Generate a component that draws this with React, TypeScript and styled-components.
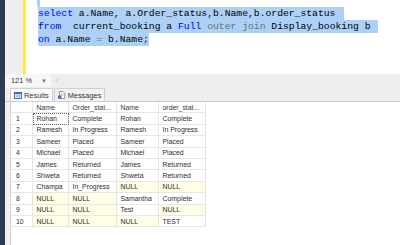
import { Fragment } from 'react';
import styled, { createGlobalStyle } from 'styled-components';

const GlobalStyle = createGlobalStyle`
    html, body {
        margin: 0;
        padding: 0;
        background: #ffffff;
    }
    body {
        width: 400px;
        height: 245px;
        overflow: hidden;
    }
`;

const Frame = styled.div`
    display: flex;
    width: 400px;
    height: 245px;
    font-family: "Liberation Sans", Arial, sans-serif;
`;

const SideStrip = styled.div`
    width: 5px;
    flex: none;
    background: #2c3a54;
`;

const Main = styled.div`
    flex: 1;
    min-width: 0;
    display: flex;
    flex-direction: column;
`;

const Editor = styled.div`
    height: 74px;
    flex: none;
    display: flex;
    overflow: hidden;
    background: #ffffff;
`;

const Gutter = styled.div`
    width: 18px;
    background: #efefef;
`;

const ChangeBar = styled.div`
    width: 3px;
    background: #fde84a;
`;

const Code = styled.div`
    flex: 1;
    padding-left: 12px;
    margin-top: -6px;
    font-family: "Liberation Mono", "DejaVu Sans Mono", monospace;
    font-size: 9.73px;
    color: #000000;
`;

const Line = styled.div`
    height: 13px;
    line-height: 13px;
    white-space: pre;
`;

const Sel = styled.span<{ $tail?: number; $caret?: boolean }>`
    display: inline-block;
    height: 13px;
    vertical-align: top;
    background: #add1f6;
    padding-right: ${(p) => p.$tail ?? 0}px;
    ${(p) => p.$caret && 'width: 3px; margin-left: -1px;'}
`;

const Kw = styled.span`
    color: #0000ff;
`;

const Op = styled.span`
    color: #6f6f6f;
`;

const ZoomBar = styled.div`
    height: 13px;
    flex: none;
    display: flex;
    font-size: 7.4px;
    color: #333333;
`;

const ZoomBox = styled.div`
    width: 46px;
    display: flex;
    align-items: center;
    justify-content: space-between;
    padding: 0 4px 0 6px;
    box-sizing: border-box;
    background: #f7f7f7;
`;

const Caret = styled.span`
    font-size: 6px;
    color: #777777;
`;

const ScrollTrack = styled.div`
    flex: 1;
    display: flex;
    align-items: center;
    padding-left: 4px;
    background: #eeeeee;
    color: #c4c4c4;
    font-size: 7px;
`;

const TabStrip = styled.div`
    height: 14px;
    flex: none;
    display: flex;
    align-items: flex-end;
    padding-left: 5px;
    background: #eeeeee;
    border-bottom: 1px solid #cdcdcd;
`;

const Tab = styled.div<{ $active?: boolean }>`
    height: 12px;
    display: flex;
    align-items: center;
    gap: 2px;
    padding: 0 3px;
    border: 1px solid #cfcfcf;
    border-bottom: none;
    margin-right: 1px;
    background: ${(p) => (p.$active ? '#fbfbfb' : '#f1f1f1')};
    font-size: 7.4px;
    color: #333333;
`;

const ResultsArea = styled.div`
    flex: 1;
    display: flex;
    min-height: 0;
`;

const ResultsGap = styled.div`
    width: 5px;
    background: #f0f0f0;
`;

const GridPane = styled.div`
    flex: 1;
    background: #ffffff;
    border-left: 1px solid #d4d4d4;
`;

const Grid = styled.div`
    display: grid;
    grid-template-columns: 22px 36px 48px 42px 47px;
    grid-auto-rows: 11.4px;
    font-size: 6.9px;
    color: #2e2e2e;
`;

const Cell = styled.div<{ $null?: boolean; $focus?: boolean; $num?: boolean }>`
    display: flex;
    align-items: center;
    padding-left: ${(p) => (p.$num ? 5 : 3.5)}px;
    box-sizing: border-box;
    white-space: nowrap;
    overflow: hidden;
    border-right: 1px solid #e6e6e6;
    border-bottom: 1px solid #e6e6e6;
    background: ${(p) => (p.$null ? '#fffde3' : '#ffffff')};
    ${(p) => p.$focus && 'outline: 1px dotted #6a6a6a; outline-offset: -1px;'}
`;

const HeadCell = styled(Cell)`
    height: 11px;
    color: #3a3a3a;
`;

function GridIcon() {
    return (
        <svg width="8" height="7" viewBox="0 0 8 7">
            <rect x="0.5" y="0.5" width="7" height="6" fill="#ffffff" stroke="#3f6db5" />
            <rect x="0.5" y="0.5" width="7" height="1.6" fill="#3f6db5" />
            <line x1="0.5" y1="4" x2="7.5" y2="4" stroke="#7b9fd4" strokeWidth="0.8" />
            <line x1="3" y1="2" x2="3" y2="6.5" stroke="#7b9fd4" strokeWidth="0.8" />
            <line x1="5.3" y1="2" x2="5.3" y2="6.5" stroke="#7b9fd4" strokeWidth="0.8" />
        </svg>
    );
}

function MessageIcon() {
    return (
        <svg width="8" height="8" viewBox="0 0 8 8">
            <path d="M1.5 0.5 H5 L6.8 2.3 V7.5 H1.5 Z" fill="#ffffff" stroke="#7a7a7a" strokeWidth="0.8" />
            <line x1="2.6" y1="3" x2="5.6" y2="3" stroke="#9a9a9a" strokeWidth="0.6" />
            <line x1="2.6" y1="4.4" x2="5.6" y2="4.4" stroke="#9a9a9a" strokeWidth="0.6" />
            <rect x="0" y="4.6" width="3.4" height="3" fill="#3f6db5" />
        </svg>
    );
}

const rows: string[][] = [
    ['Rohan', 'Complete', 'Rohan', 'Complete'],
    ['Ramesh', 'In Progress', 'Ramesh', 'In Progress'],
    ['Sameer', 'Placed', 'Sameer', 'Placed'],
    ['Michael', 'Placed', 'Michael', 'Placed'],
    ['James', 'Returned', 'James', 'Returned'],
    ['Shweta', 'Returned', 'Shweta', 'Returned'],
    ['Champa', 'In_Progress', 'NULL', 'NULL'],
    ['NULL', 'NULL', 'Samantha', 'Complete'],
    ['NULL', 'NULL', 'Test', 'NULL'],
    ['NULL', 'NULL', 'NULL', 'TEST'],
];

const headers = ['', 'Name', 'Order_stat...', 'Name', 'order_stat...'];

export default function App() {
    return (
        <>
            <GlobalStyle />
            <Frame>
                <SideStrip />
                <Main>
                    <Editor>
                        <Gutter />
                        <ChangeBar />
                        <Code>
                            <Line><Sel $caret /></Line>
                            <Line>
                                <Sel $tail={9}><Kw>select</Kw> a.Name, a.Order_status,b.Name,b.order_status</Sel>
                            </Line>
                            <Line>
                                <Sel $tail={7}><Kw>from</Kw>  current_booking a <Kw>Full</Kw> <Op>outer join</Op> Display_booking b</Sel>
                            </Line>
                            <Line>
                                <Sel><Kw>on</Kw> a.Name <Op>=</Op> b.Name;</Sel>
                            </Line>
                        </Code>
                    </Editor>
                    <ZoomBar>
                        <ZoomBox>
                            <span>121 %</span>
                            <Caret>▼</Caret>
                        </ZoomBox>
                        <ScrollTrack>&lt;</ScrollTrack>
                    </ZoomBar>
                    <TabStrip>
                        <Tab $active>
                            <GridIcon />
                            Results
                        </Tab>
                        <Tab>
                            <MessageIcon />
                            Messages
                        </Tab>
                    </TabStrip>
                    <ResultsArea>
                        <ResultsGap />
                        <GridPane>
                            <Grid>
                                {headers.map((h, i) => (
                                    <HeadCell key={`h${i}`}>{h}</HeadCell>
                                ))}
                                {rows.map((row, r) => (
                                    <Fragment key={`r${r}`}>
                                        <Cell $num>{r + 1}</Cell>
                                        {row.map((v, c) => (
                                            <Cell
                                                key={`c${c}`}
                                                $null={v === 'NULL'}
                                                $focus={r === 0 && c === 0}
                                            >
                                                {v}
                                            </Cell>
                                        ))}
                                    </Fragment>
                                ))}
                            </Grid>
                        </GridPane>
                    </ResultsArea>
                </Main>
            </Frame>
        </>
    );
}
